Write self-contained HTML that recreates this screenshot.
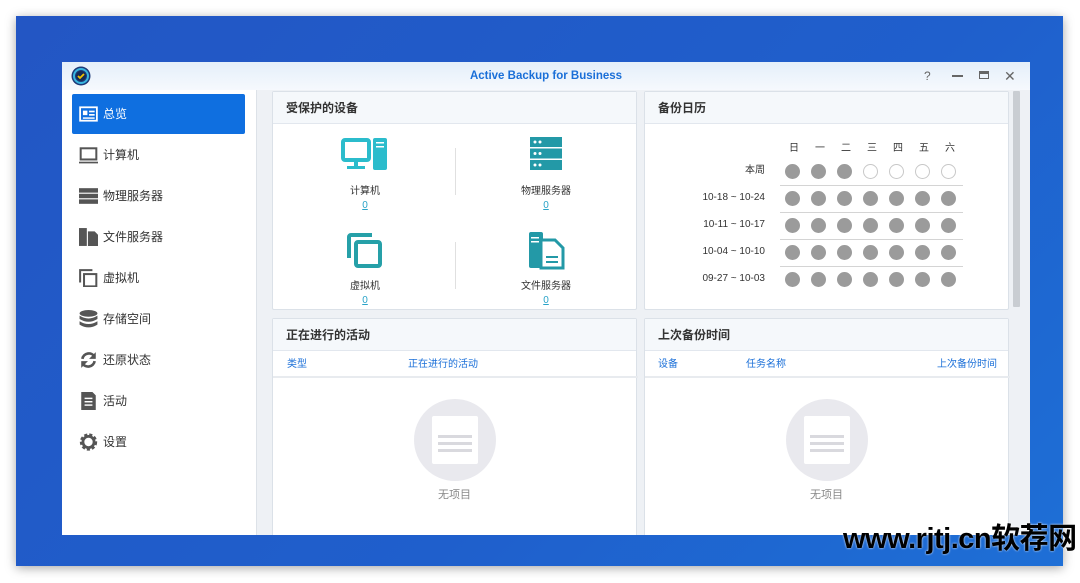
<!DOCTYPE html>
<html><head><meta charset="utf-8"><style>
*{margin:0;padding:0;box-sizing:border-box}
body{width:1080px;height:583px;background:#fff;position:relative;overflow:hidden;font-family:"Liberation Sans","Noto Sans CJK SC",sans-serif;font-size:11px;color:#333}
.abs{position:absolute}
#desk{left:16px;top:16px;width:1047px;height:550px;background:linear-gradient(135deg,#2356c4,#1f5fcc 60%,#1e6fd6);box-shadow:0 2px 10px rgba(0,0,0,.35)}
#win{left:62px;top:62px;width:968px;height:473px;background:#eef1f5;overflow:hidden}
#title{left:0;top:0;width:968px;height:28px;background:linear-gradient(#e4effa,#f6f9fd);text-align:center;line-height:28px;font-weight:bold;color:#1a6fd8;font-size:11.5px}
#side{left:0;top:28px;width:195px;height:445px;background:#fff;border-right:1px solid #dde2e8}
.item{position:absolute;left:10px;width:173px;height:40px;line-height:40px;padding-left:31px;font-size:12px;color:#333}
.item.sel{background:#0f6fe0;color:#fff;border-radius:2px}
.ic{position:absolute;left:7px;top:11px;width:19px;height:18px}
.panel{position:absolute;background:#fff;border:1px solid #dbe1e8;border-radius:2px}
.ph{height:32px;line-height:32px;padding-left:13px;background:#f5f8fb;border-bottom:1px solid #e2e7ee;font-size:12px;font-weight:bold;color:#333}
.dev{position:absolute;text-align:center;width:120px;font-size:10px;color:#333}
.dev .n{color:#29a3c8;text-decoration:underline;margin-top:3px}
.cal{position:absolute;font-size:10px;color:#333}
.lbl{position:absolute;right:243px;width:120px;text-align:right;font-size:10px;line-height:14px;color:#333}
.dot{position:absolute;width:15px;height:15px;border-radius:50%;background:#9b9b9b}
.dot.o{background:#fff;border:1.5px solid #c8c8c8}
.hl{position:absolute;left:135px;width:183px;height:1px;background:#d4d4d4}
.colh{position:absolute;top:36px;font-size:10px;color:#1a6fd8}
.empty{position:absolute;width:82px;height:82px;border-radius:50%;background:#e9e9ee}
.empty i{position:absolute;left:18px;top:17px;width:46px;height:48px;background:#fff;border-radius:2px}
.empty b{position:absolute;left:24px;width:34px;height:3px;background:#d9d9de}
</style></head><body>
<div id="desk" class="abs"></div>
<div id="win" class="abs">
 <div id="title" class="abs">Active Backup for Business
  <svg class="abs" style="left:9px;top:4px" width="20" height="20"><circle cx="10" cy="10" r="9.5" fill="#1d3a78"/><circle cx="10" cy="10" r="7" fill="none" stroke="#38b6e0" stroke-width="2"/><circle cx="10" cy="10" r="5" fill="#152a55"/><path d="M7 10l2 2 4-4" stroke="#f2c200" stroke-width="1.8" fill="none"/></svg>
  <span class="abs" style="left:862px;top:0;color:#666;font-weight:normal;font-size:12px">?</span>
  <span class="abs" style="left:890px;top:13px;width:11px;height:1.5px;background:#666"></span>
  <span class="abs" style="left:917px;top:9px;width:10px;height:8px;border:1.5px solid #666;border-top-width:3px"></span>
  <span class="abs" style="left:942px;top:0;color:#666;font-weight:normal;font-size:14px">✕</span>
 </div>
 <div id="side" class="abs">
  <div class="item sel" style="top:4px"><svg class="ic" viewBox="0 0 17 16"><rect x="1" y="2" width="15" height="12" fill="none" stroke="#fff" stroke-width="1.6"/><rect x="3.5" y="5" width="4" height="4" fill="#fff"/><rect x="9" y="5" width="5" height="1.5" fill="#fff"/><rect x="9" y="8" width="5" height="1.5" fill="#fff"/><rect x="3.5" y="11" width="10.5" height="1.3" fill="#fff"/></svg>总览</div>
  <div class="item" style="top:45px"><svg class="ic" viewBox="0 0 17 16"><rect x="1.5" y="2" width="14" height="10" fill="none" stroke="#555" stroke-width="1.8"/><rect x="0" y="14" width="17" height="1.5" fill="#555"/></svg>计算机</div>
  <div class="item" style="top:86px"><svg class="ic" viewBox="0 0 17 16"><rect x="0" y="1" width="17" height="4" fill="#555"/><rect x="0" y="6" width="17" height="4" fill="#555"/><rect x="0" y="11" width="17" height="4" fill="#555"/></svg>物理服务器</div>
  <div class="item" style="top:127px"><svg class="ic" viewBox="0 0 17 16"><rect x="0" y="0" width="7" height="16" fill="#555"/><path d="M8 3h6l3 3v10H8z" fill="#555"/></svg>文件服务器</div>
  <div class="item" style="top:168px"><svg class="ic" viewBox="0 0 17 16"><path d="M1 12V1h11" fill="none" stroke="#555" stroke-width="1.8"/><rect x="4.5" y="4.5" width="11" height="11" fill="none" stroke="#555" stroke-width="1.8"/></svg>虚拟机</div>
  <div class="item" style="top:209px"><svg class="ic" viewBox="0 0 17 16"><ellipse cx="8.5" cy="3" rx="8" ry="3" fill="#555"/><path d="M.5 5q8 5 16 0v3q-8 5-16 0zM.5 10q8 5 16 0v3q-8 5-16 0z" fill="#555"/></svg>存储空间</div>
  <div class="item" style="top:250px"><svg class="ic" viewBox="0 0 17 16"><path d="M3 7a6 6 0 0 1 11-2M14 9a6 6 0 0 1-11 2" fill="none" stroke="#555" stroke-width="2.4"/><path d="M15 1v6h-6zM2 15V9h6z" fill="#555"/></svg>还原状态</div>
  <div class="item" style="top:291px"><svg class="ic" viewBox="0 0 17 16"><path d="M2 0h10l3 3v13H2z" fill="#555"/><rect x="5" y="5" width="7" height="1.3" fill="#fff"/><rect x="5" y="8" width="7" height="1.3" fill="#fff"/><rect x="5" y="11" width="7" height="1.3" fill="#fff"/></svg>活动</div>
  <div class="item" style="top:332px"><svg class="ic" viewBox="0 0 17 16"><circle cx="8.5" cy="8" r="6" fill="none" stroke="#555" stroke-width="3.5" stroke-dasharray="2.5 1.6"/><circle cx="8.5" cy="8" r="5" fill="none" stroke="#555" stroke-width="2.5"/></svg>设置</div>
 </div>
 <div class="panel" style="left:210px;top:29px;width:365px;height:219px"><div class="ph">受保护的设备</div>
  <div class="abs" style="left:182px;top:56px;width:1px;height:47px;background:#e0e0e0"></div>
  <div class="abs" style="left:182px;top:150px;width:1px;height:47px;background:#e0e0e0"></div>
  <svg class="abs" style="left:68px;top:46px" width="47" height="34"><rect x="2" y="2" width="26" height="20" rx="2" fill="none" stroke="#2bbccc" stroke-width="4"/><rect x="13" y="22" width="4" height="6" fill="#2bbccc"/><rect x="6" y="28" width="18" height="3" fill="#2bbccc"/><rect x="32" y="0" width="14" height="32" rx="2" fill="#2bbccc"/><rect x="35" y="4" width="8" height="1.5" fill="#fff"/><rect x="35" y="8" width="8" height="1.5" fill="#fff"/></svg>
  <div class="dev" style="left:32px;top:90px">计算机<div class="n">0</div></div>
  <svg class="abs" style="left:257px;top:45px" width="32" height="33"><rect x="0" y="0" width="32" height="10" fill="#2399a7"/><rect x="0" y="11.5" width="32" height="10" fill="#2399a7"/><rect x="0" y="23" width="32" height="10" fill="#2399a7"/><g fill="#fff"><circle cx="5" cy="5" r="1.5"/><circle cx="10" cy="5" r="1.5"/><circle cx="5" cy="16.5" r="1.5"/><circle cx="10" cy="16.5" r="1.5"/><circle cx="5" cy="28" r="1.5"/><circle cx="10" cy="28" r="1.5"/></g></svg>
  <div class="dev" style="left:213px;top:90px">物理服务器<div class="n">0</div></div>
  <svg class="abs" style="left:73px;top:140px" width="36" height="36"><path d="M3 26V5a2 2 0 0 1 2-2h21" fill="none" stroke="#26a0a8" stroke-width="4"/><rect x="10" y="10" width="24" height="24" rx="2" fill="none" stroke="#26a0a8" stroke-width="4"/></svg>
  <div class="dev" style="left:32px;top:185px">虚拟机<div class="n">0</div></div>
  <svg class="abs" style="left:256px;top:140px" width="36" height="38"><rect x="0" y="0" width="14" height="36" rx="2" fill="#2399a7"/><path d="M12 8h14l8 8v20H12z" fill="#fff" stroke="#2399a7" stroke-width="3"/><rect x="17" y="24" width="12" height="2" fill="#2399a7"/><rect x="17" y="29" width="12" height="2" fill="#2399a7"/><rect x="2" y="5" width="8" height="1.5" fill="#fff"/><rect x="2" y="9" width="8" height="1.5" fill="#fff"/></svg>
  <div class="dev" style="left:213px;top:185px">文件服务器<div class="n">0</div></div>
 </div>
 <div class="panel" style="left:582px;top:29px;width:365px;height:219px"><div class="ph">备份日历</div>
  <div class="cal" style="left:0;top:47px;width:365px">
   <span class="abs" style="left:144px">日</span><span class="abs" style="left:170px">一</span><span class="abs" style="left:196px">二</span><span class="abs" style="left:222px">三</span><span class="abs" style="left:248px">四</span><span class="abs" style="left:274px">五</span><span class="abs" style="left:300px">六</span>
  </div>
  <div class="lbl" style="top:72px">本周</div>
  <div class="lbl" style="top:99px">10-18 ~ 10-24</div>
  <div class="lbl" style="top:126px">10-11 ~ 10-17</div>
  <div class="lbl" style="top:153px">10-04 ~ 10-10</div>
  <div class="lbl" style="top:180px">09-27 ~ 10-03</div>
  <div class="hl" style="top:93px"></div><div class="hl" style="top:120px"></div><div class="hl" style="top:147px"></div><div class="hl" style="top:174px"></div>
  <div id="dots"></div>
 </div>
 <div class="abs" style="left:951px;top:29px;width:7px;height:216px;background:#c9cdd2;border-radius:1px"></div>
 <div class="panel" style="left:210px;top:256px;width:365px;height:230px"><div class="ph">正在进行的活动</div>
  <span class="colh" style="left:14px">类型</span><span class="colh" style="left:135px">正在进行的活动</span>
  <div class="abs" style="left:0;top:57px;width:365px;height:2px;background:#e8ebef"></div>
  <div class="empty" style="left:141px;top:80px"><i></i><b style="top:36px"></b><b style="top:43px"></b><b style="top:50px"></b></div>
  <div class="abs" style="left:0;top:167px;width:363px;text-align:center;color:#888;font-size:11px">无项目</div>
 </div>
 <div class="panel" style="left:582px;top:256px;width:365px;height:230px"><div class="ph">上次备份时间</div>
  <span class="colh" style="left:13px">设备</span><span class="colh" style="left:101px">任务名称</span><span class="colh" style="left:292px">上次备份时间</span>
  <div class="abs" style="left:0;top:57px;width:365px;height:2px;background:#e8ebef"></div>
  <div class="empty" style="left:141px;top:80px"><i></i><b style="top:36px"></b><b style="top:43px"></b><b style="top:50px"></b></div>
  <div class="abs" style="left:0;top:167px;width:363px;text-align:center;color:#888;font-size:11px">无项目</div>
 </div>
</div>
<div class="abs" style="left:843px;top:515px;font-size:29px;font-weight:bold;color:#000;letter-spacing:-0.5px;white-space:nowrap;text-shadow:0 0 2px #fff">www.rjtj.cn软荐网</div>
<script>
var d=document.getElementById('dots'),h='';
for(var r=0;r<5;r++)for(var c=0;c<7;c++){var o=(r==0&&c>2)?' o':'';h+='<div class="dot'+o+'" style="left:'+(140+c*26)+'px;top:'+(72+r*27)+'px"></div>';}
d.innerHTML=h;
</script>
</body></html>
